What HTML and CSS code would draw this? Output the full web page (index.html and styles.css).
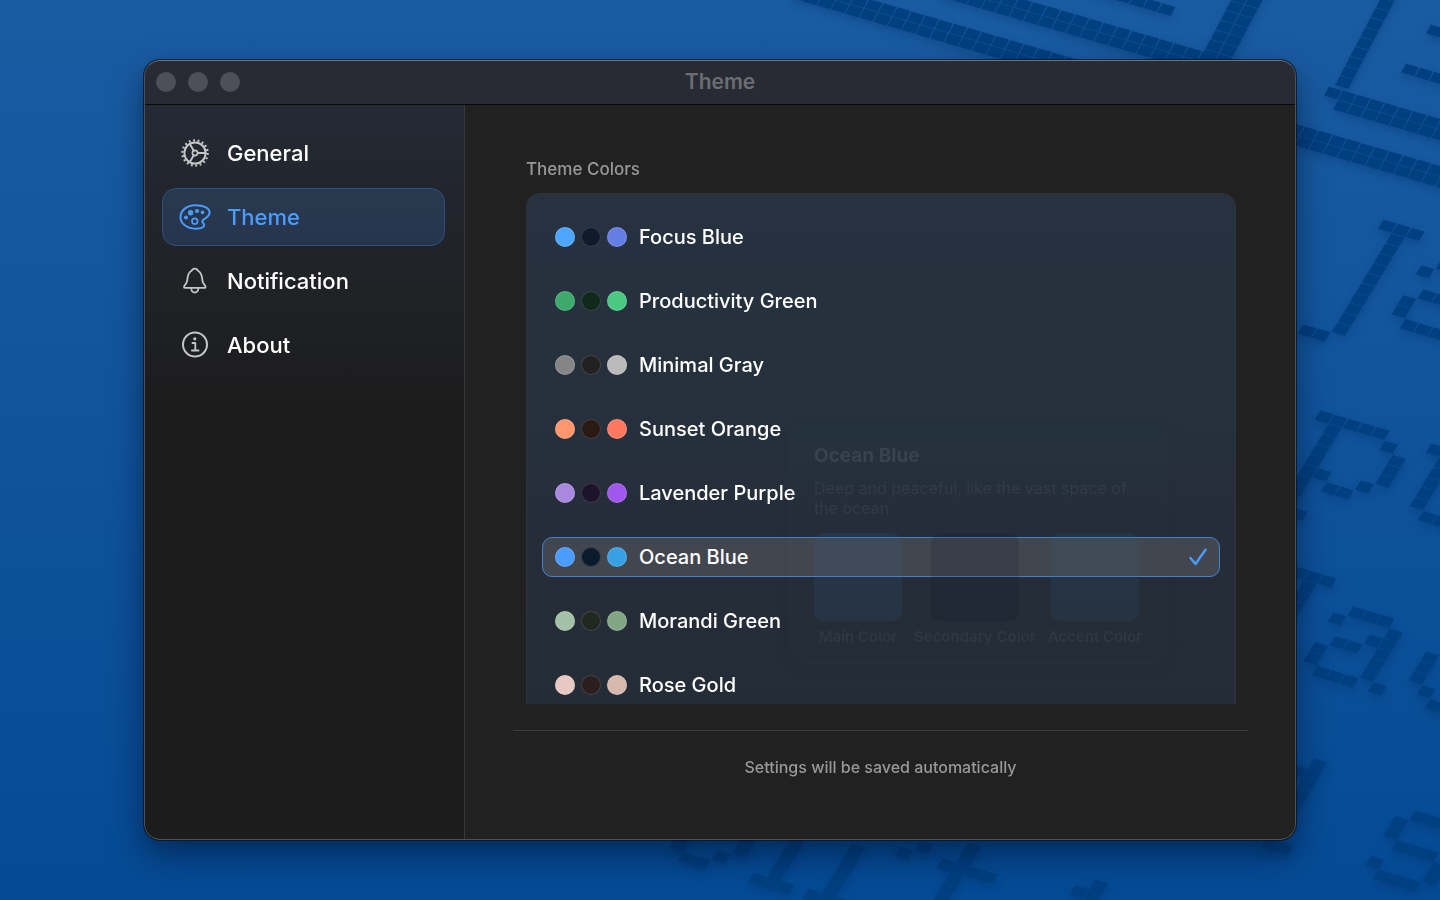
FILE: index.html
```html
<!DOCTYPE html>
<html lang="en">
<head>
  <meta charset="UTF-8">
  <meta name="viewport" content="width=device-width, initial-scale=1">
  <title>Theme</title>
  <link rel="stylesheet" href="styles.css">
</head>
<body>
  <svg class="wallpaper" id="wallpaper" viewBox="0 0 1440 900" preserveAspectRatio="xMidYMid slice" aria-hidden="true"></svg>

  <div class="window">
    <header class="titlebar">
      <div class="lights">
        <button class="light" aria-label="Close"></button>
        <button class="light" aria-label="Minimize"></button>
        <button class="light" aria-label="Zoom"></button>
      </div>
      <h1>Theme</h1>
    </header>

    <div class="body">
      <nav class="sidebar">
        <button class="tab">
          <svg class="icon" viewBox="0 0 32 32">
            <circle cx="16" cy="16" r="12.6" stroke-width="2.4" stroke-dasharray="1.8 2.598"/>
            <circle cx="16" cy="16" r="10.6" stroke-width="2"/>
            <circle cx="16" cy="16" r="2.6" stroke-width="1.6"/>
            <path d="M18.6 16h8M14.7 13.7l-4-6.9M14.7 18.3l-4 6.9" stroke-width="1.9"/>
          </svg>
          General
        </button>
        <button class="tab active">
          <svg class="icon" viewBox="0 0 32 32">
            <path d="M16.2 4.2C8 4.2 1.5 9.4 1.5 16S7.8 27.7 16.6 27.7c4.8 0 8.5-1.2 8.5-3.6 0-1.8-1.8-2-1.8-3.7 0-3.4 7.3-3 7.3-8.8 0-4.8-6.2-7.4-14.4-7.4z" stroke-width="2"/>
            <circle cx="15.8" cy="20.2" r="2.8" stroke-width="1.7"/>
            <g fill="currentColor" stroke="none">
              <circle cx="7" cy="16.4" r="2"/>
              <circle cx="11.6" cy="11.7" r="2.7"/>
              <circle cx="18" cy="10" r="2.1"/>
              <circle cx="23.5" cy="11.4" r="1.8"/>
            </g>
          </svg>
          Theme
        </button>
        <button class="tab">
          <svg class="icon" viewBox="0 0 32 32">
            <path d="M5 21.9c0-1.5 2.4-3 3-5.3.7-3-.1-8.6 4.7-10.8.5-1.5 1.7-2.2 3.1-2.2s2.6.7 3.1 2.2c4.8 2.2 4 7.8 4.7 10.8.6 2.3 3 3.8 3 5.3 0 .7-.5 1-1.2 1H6.200c-.7 0-1.2-.3-1.2-1z" stroke-width="1.8"/>
            <path d="M12.3 23.5c.2 2.6 1.700 4 3.5 4s3.300-1.400 3.500-4" stroke-width="1.8"/>
          </svg>
          Notification
        </button>
        <button class="tab">
          <svg class="icon" viewBox="0 0 32 32">
            <circle cx="16" cy="15.5" r="12" stroke-width="2"/>
            <circle cx="15.8" cy="9.8" r="1.6" fill="currentColor" stroke="none"/>
            <path d="M13.4 14h2.9v7.4M12.9 21.5h6.6" stroke-width="1.8"/>
          </svg>
          About
        </button>
      </nav>

      <main class="content">
        <h2 id="colors">Theme Colors</h2>
        <div class="scroller">
          <div class="panel" role="radiogroup" aria-labelledby="colors">
            <label class="theme">
              <input type="radio" name="theme">
              <span class="dots"><i class="dot focus-main"></i><i class="dot focus-base"></i><i class="dot focus-accent"></i></span>
              Focus Blue
            </label>
            <label class="theme">
              <input type="radio" name="theme">
              <span class="dots"><i class="dot green-main"></i><i class="dot green-base"></i><i class="dot green-accent"></i></span>
              Productivity Green
            </label>
            <label class="theme">
              <input type="radio" name="theme">
              <span class="dots"><i class="dot gray-main"></i><i class="dot gray-base"></i><i class="dot gray-accent"></i></span>
              Minimal Gray
            </label>
            <label class="theme">
              <input type="radio" name="theme">
              <span class="dots"><i class="dot sunset-main"></i><i class="dot sunset-base"></i><i class="dot sunset-accent"></i></span>
              Sunset Orange
            </label>
            <label class="theme">
              <input type="radio" name="theme">
              <span class="dots"><i class="dot lavender-main"></i><i class="dot lavender-base"></i><i class="dot lavender-accent"></i></span>
              Lavender Purple
            </label>
            <label class="theme selected">
              <input type="radio" name="theme" checked>
              <span class="dots"><i class="dot ocean-main"></i><i class="dot ocean-base"></i><i class="dot ocean-accent"></i></span>
              Ocean Blue
              <svg class="check" viewBox="0 0 20 20"><path d="M3.5 11l5 6L18.5 2.8"/></svg>
            </label>
            <label class="theme">
              <input type="radio" name="theme">
              <span class="dots"><i class="dot morandi-main"></i><i class="dot morandi-base"></i><i class="dot morandi-accent"></i></span>
              Morandi Green
            </label>
            <label class="theme">
              <input type="radio" name="theme">
              <span class="dots"><i class="dot rose-main"></i><i class="dot rose-base"></i><i class="dot rose-accent"></i></span>
              Rose Gold
            </label>

            <!-- preview card, fading out -->
            <div class="preview">
              <h3>Ocean Blue</h3>
              <p>Deep and peaceful, like the vast space of the ocean</p>
              <div class="swatches">
                <div class="swatch"><i class="chip chip-main"></i>Main Color</div>
                <div class="swatch"><i class="chip chip-base"></i>Secondary Color</div>
                <div class="swatch"><i class="chip chip-accent"></i>Accent Color</div>
              </div>
            </div>
          </div>
        </div>
        <footer>Settings will be saved automatically</footer>
      </main>
    </div>
  </div>

  <script src="wallpaper.js"></script>
</body>
</html>
```
FILE: styles.css
```css
* { box-sizing: border-box; }
body {
  margin: 0;
  height: 100vh;
  overflow: hidden;
  padding: 60px 10vw;
  font-family: Inter, "Liberation Sans", sans-serif;
  color: #fff;
  background: linear-gradient(#1a5ca2, #054a94);
}
h1, h2, h3, p { margin: 0; }
button { font: inherit; color: inherit; border: 0; padding: 0; background: none; }

.wallpaper { position: absolute; top: 0; left: 0; width: 100%; height: 100%; }
.wallpaper path { fill: #003f80; }
.wallpaper g { filter: drop-shadow(0 4px 4px rgba(0, 40, 90, 0.3)); }

/* window */
.window {
  position: relative;
  height: 100%;
  display: flex;
  flex-direction: column;
  border-radius: 16px;
  overflow: hidden;
  background: #212121;
  box-shadow: 0 0 0 1px rgba(0, 15, 35, 0.7), 0 14px 32px rgba(0, 10, 30, 0.5);
}
.window::after {
  content: "";
  position: absolute;
  inset: 0;
  border: 1px solid #505050;
  border-top-color: #707276;
  border-radius: 16px;
  pointer-events: none;
}
.titlebar {
  flex: none;
  display: grid;
  grid-template-columns: 1fr auto 1fr;
  align-items: center;
  height: 45px;
  padding: 0 12px;
  background: #282b33;
  border-bottom: 1px solid #080909;
}
.titlebar h1 { font-size: 21px; line-height: 24px; font-weight: 600; color: #6b6d73; }
.lights { display: flex; gap: 12px; }
.light { width: 20px; height: 20px; border-radius: 50%; background: #4d5058; }
.body { flex: 1; min-height: 0; display: flex; }

/* sidebar */
.sidebar {
  flex: none;
  width: 321px;
  padding: 19px 19px 0 18px;
  display: flex;
  flex-direction: column;
  gap: 6px;
  background: linear-gradient(#242b34, #22252e 80px, #202226 180px, #1c1c1d 300px, #1c1c1c);
  border-right: 1px solid #36393e;
}
.tab {
  display: flex;
  align-items: center;
  gap: 16px;
  height: 58px;
  padding: 0 16px;
  border: 1px solid transparent;
  border-radius: 14px;
  font-size: 22px;
  font-weight: 500;
}
.tab.active { color: #4a9dff; background: linear-gradient(#28394e, #27354c); border-color: #2c5180; }
.icon { width: 32px; height: 32px; fill: none; stroke: currentColor; stroke-linecap: round; stroke-linejoin: round; color: #c4c5c6; }
.icon circle { stroke-linecap: butt; }
.active .icon { color: inherit; }

/* theme list */
.content { flex: 1; min-width: 0; padding: 52px 48px 0; display: flex; flex-direction: column; }
.content h2 { padding-left: 13px; font-size: 17px; line-height: 24px; font-weight: 500; color: #989898; }
.scroller { flex: 1; min-height: 0; overflow: hidden; margin: 12px 12px 0 13px; }
.panel {
  position: relative;
  display: flex;
  flex-direction: column;
  gap: 24px;
  padding: 23px 15px;
  border: 1px solid #303439;
  border-radius: 14px;
  background: linear-gradient(#263240, #26303c 260px, #262d3a 320px, #242c36);
}
.theme {
  position: relative;
  display: flex;
  align-items: center;
  gap: 12px;
  height: 40px;
  padding: 0 12px;
  border: 1px solid transparent;
  border-radius: 10px;
  font-size: 20px;
  font-weight: 500;
}
.theme input { position: absolute; opacity: 0; }
.theme.selected { background: #42464f; border-color: #4382d2; }
.dots { display: flex; gap: 6px; }
.dot { width: 20px; height: 20px; border-radius: 50%; border: 1px solid rgba(255, 255, 255, 0.15); }
.check { width: 20px; height: 20px; margin-left: auto; fill: none; stroke: #4a9dff; stroke-width: 2.4; stroke-linecap: round; stroke-linejoin: round; }

.focus-main { background-color: #4da6ff; }
.focus-base { background-color: #0f1b2a; }
.focus-accent { background-color: #657ee6; }
.green-main { background-color: #3daa6c; }
.green-base { background-color: #10291b; }
.green-accent { background-color: #4bc882; }
.gray-main { background-color: #858585; }
.gray-base { background-color: #212121; }
.gray-accent { background-color: #bababa; }
.sunset-main { background-color: #ff966d; }
.sunset-base { background-color: #291a14; }
.sunset-accent { background-color: #ff785f; }
.lavender-main { background-color: #a989e0; }
.lavender-base { background-color: #1c142a; }
.lavender-accent { background-color: #a156ee; }
.ocean-main { background-color: #4a9dff; }
.ocean-base { background-color: #0b1b2b; }
.ocean-accent { background-color: #38a0e5; }
.morandi-main { background-color: #a3c1a6; }
.morandi-base { background-color: #20281f; }
.morandi-accent { background-color: #82a684; }
.rose-main { background-color: #e7c8c3; }
.rose-base { background-color: #2a1e1e; }
.rose-accent { background-color: #d6b8ad; }

.preview {
  position: absolute;
  top: 229px;
  left: 262px;
  width: 378px;
  padding: 20px 24px 16px;
  border: 1px solid rgba(255, 255, 255, 0.012);
  border-radius: 18px;
  background: linear-gradient(rgba(33, 57, 66, 0.25), rgba(36, 44, 54, 0) 90px);
  box-shadow: 0 4px 20px rgba(0, 0, 0, 0.03);
  pointer-events: none;
}
.preview h3 { font-size: 19px; line-height: 24px; font-weight: 700; color: #36434d; }
.preview p { margin-top: 10px; font-size: 16px; line-height: 20px; color: #323b48; }
.swatches { display: flex; gap: 12px; margin-top: 15px; }
.swatch { display: flex; flex-direction: column; align-items: center; gap: 6px; font-size: 15px; line-height: 20px; font-weight: 600; white-space: nowrap; color: #303743; }
.chip { width: 88px; height: 88px; border-radius: 10px; }
.chip-main { background: rgba(50, 105, 170, 0.13); }
.chip-base { background: rgba(13, 24, 36, 0.16); }
.chip-accent { background: rgba(40, 110, 145, 0.12); }

.content footer {
  height: 110px;
  margin-top: 26px;
  padding-top: 26px;
  border-top: 1px solid #3c3c3c;
  text-align: center;
  font-size: 16px;
  line-height: 20px;
  font-weight: 500;
  color: #989898;
}
```
FILE: wallpaper.js
```js
// Tile shapes on a slanted grid: each one is [x, y, rows], "#" is a tile.
const GRID = [14.1, 4.1, -6, 9.9];
const GRID_FAR = [14.1, 4.1, -5.1, 9.7];

const row = (n) => "#".repeat(n);
const col = (n) => Array(n).fill("#");

const bowl = [".###..", "#...#.", "...##.", ".##.#.", "#...#.", "#...#.", ".###.#"];

const farShapes = [
  [803, -15, [row(20), row(20)]],
  [953, -16, [row(19), row(19)]],
  [1096, -11, [row(6)]],
  [1245, -12, Array(8).fill("##")],
  [1390, -5, col(10)],
  [1333, 93, [row(9), row(9).replace("#", ".")]],
  [1295, 129, [row(12), row(12)]],
  [1435, 31, ["##"]],
  [1410, 70, ["####"]]
];

const nearShapes = [
  [1373, 222, [".###", ...Array(10).fill("..#."), "##.."]],
  [1431, 262, bowl],
  [1324, 417, ["#####", ".#...#", ".#....#", ".#....#", ".#....#", ".##..#", ".#.##", ".#", ".#", "###"]],
  [1435, 450, ["##", ".#", ".#", ".#", ".#", ".#", "..###"]],
  [1299, 573, ["###", ".#", ".#", ".#"]],
  [1343, 609, bowl],
  [1430, 658, ["#", "#", "#", ".#", "..##"]],
  [1304, 761, [".#", "##", ".#", ".#", ".#", ".#", "", "", ".##"]],
  [1405, 813, [".###.", "#...#", "#....", ".###.", "....#", "#...#", ".###."]],
  [691, 825, ["#...#", "#...#", "#..#.", ".##.."]],
  [781, 840, [".#", ".#", ".#", ".#", "###"]],
  [842, 846, [".#", ".#", ".#", ".#", ".#", "###"]],
  [910, 843, [".#", "#"]],
  [958, 845, [".#", ".#", "####", ".#", ".#", ".#"]],
  [1085, 882, [".#", "##"]]
];

function draw(list, grid) {
  return list.map(([x, y, rows]) => {
    let d = "";
    rows.forEach((line, r) => {
      [...line].forEach((c, i) => {
        if (c === "#") d += `M${i - 0.46} ${r - 0.46}h.92v.92h-.92z`;
      });
    });
    return `<path transform="matrix(${grid.join(" ")} ${x} ${y})" d="${d}"/>`;
  }).join("");
}

document.getElementById("wallpaper").innerHTML =
  `<g>${draw(farShapes, GRID_FAR)}${draw(nearShapes, GRID)}</g>`;
```
